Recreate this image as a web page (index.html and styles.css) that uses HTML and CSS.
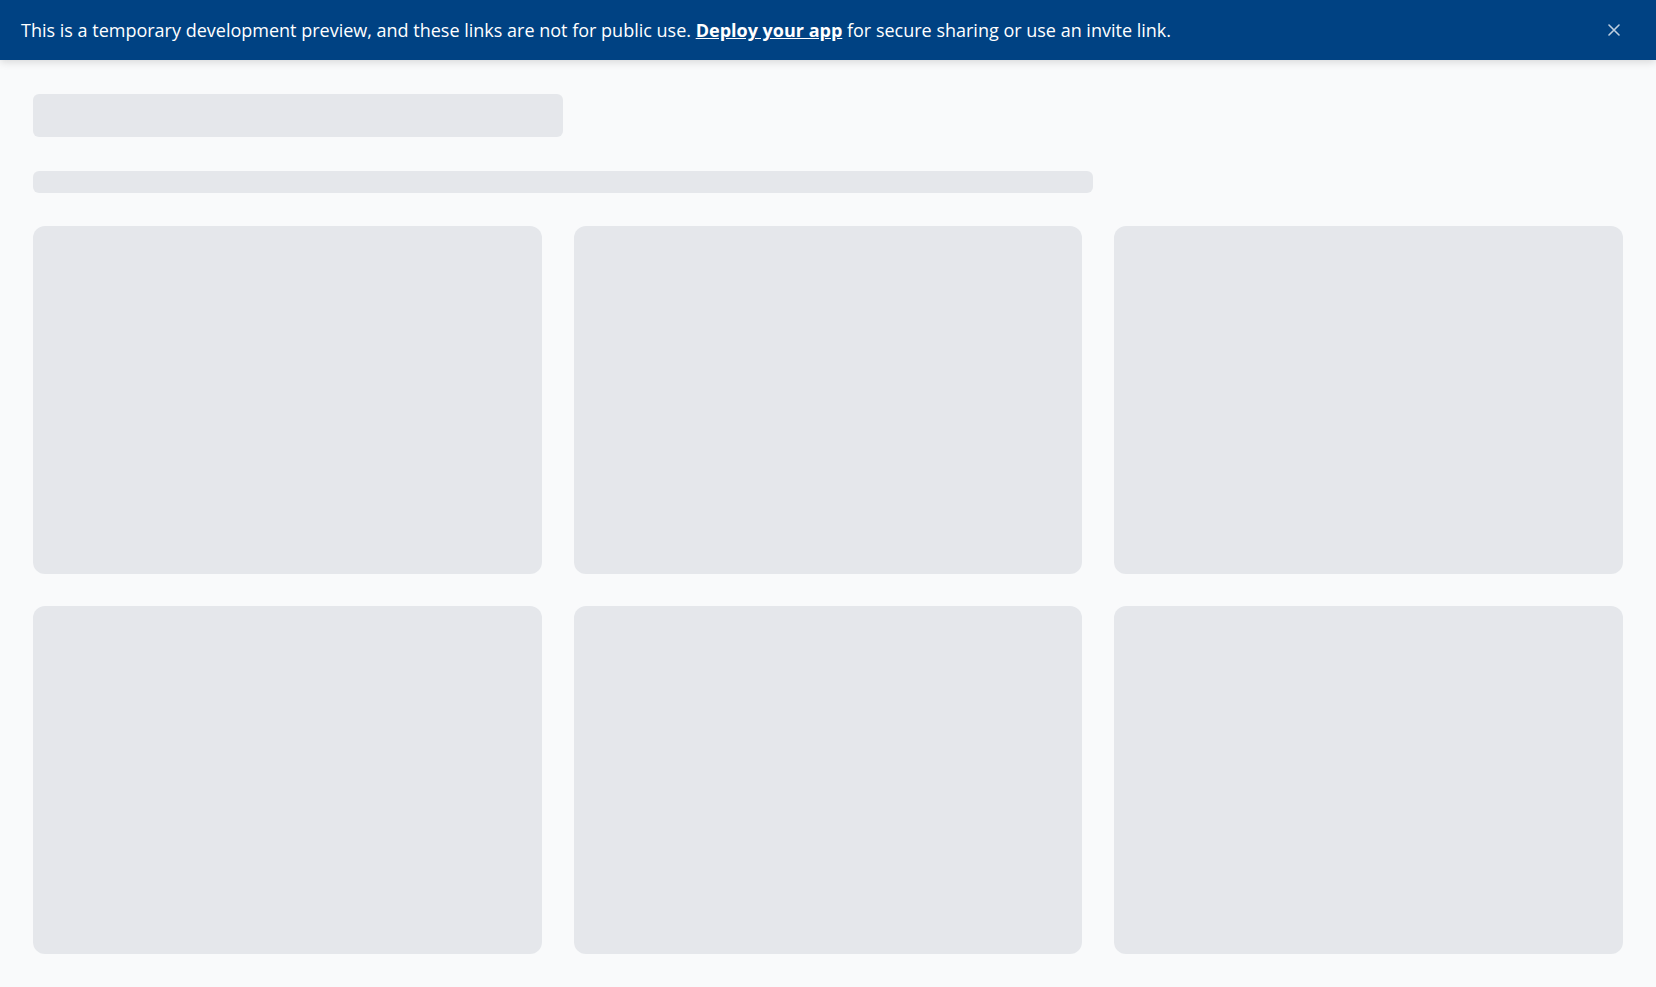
FILE: index.html
```html
<!DOCTYPE html>
<html lang="en">
<head>
<meta charset="utf-8">
<title>Preview</title>
<link rel="stylesheet" href="styles.css">
</head>
<body>
  <div class="banner">
    <p class="banner-text">This is a temporary development preview, and these links are not for public use. <a class="banner-link" href="#">Deploy your app</a> for secure sharing or use an invite link.</p>
    <button class="banner-close" aria-label="Close">
      <svg width="12" height="12" viewBox="0 0 12 12"><path d="M1 1 L11 11 M11 1 L1 11" stroke="currentColor" stroke-width="1.6" stroke-linecap="round" fill="none"/></svg>
    </button>
  </div>
  <main class="main">
    <div class="sk sk-title"></div>
    <div class="sk sk-sub"></div>
    <div class="grid">
      <div class="sk card"></div>
      <div class="sk card"></div>
      <div class="sk card"></div>
      <div class="sk card"></div>
      <div class="sk card"></div>
      <div class="sk card"></div>
    </div>
  </main>
</body>
</html>
```

FILE: styles.css
```css
html, body {
  margin: 0;
  padding: 0;
}
body {
  background: #f9fafb;
  font-family: "Open Sans", "Noto Sans", sans-serif;
  height: 987px;
  overflow: hidden;
}
.banner {
  height: 60px;
  background: #004283;
  color: #ffffff;
  display: flex;
  align-items: center;
  justify-content: space-between;
  padding: 0 36px 0 21px;
  box-sizing: border-box;
  box-shadow: 0 2px 8px rgba(0, 0, 0, 0.14);
  position: relative;
  z-index: 1;
}
.banner-text {
  margin: 0;
  font-size: 18px;
  line-height: 24px;
  color: #ffffff;
}
.banner-link {
  color: #ffffff;
  font-weight: 700;
  text-decoration: underline;
}
.banner-close {
  background: none;
  border: none;
  padding: 0;
  color: rgba(255, 255, 255, 0.75);
  display: flex;
  align-items: center;
  justify-content: center;
  width: 12px;
  height: 12px;
}
.main {
  padding: 34px 33px 0 33px;
  display: flex;
  flex-direction: column;
}
.sk {
  background: #e5e7eb;
}
.sk-title {
  width: 530px;
  height: 43px;
  border-radius: 6px;
}
.sk-sub {
  width: 1060px;
  height: 22px;
  border-radius: 6px;
  margin-top: 34px;
}
.grid {
  margin-top: 33px;
  display: grid;
  grid-template-columns: repeat(3, 1fr);
  gap: 32px 32px;
}
.card {
  height: 348px;
  border-radius: 12px;
}
```
